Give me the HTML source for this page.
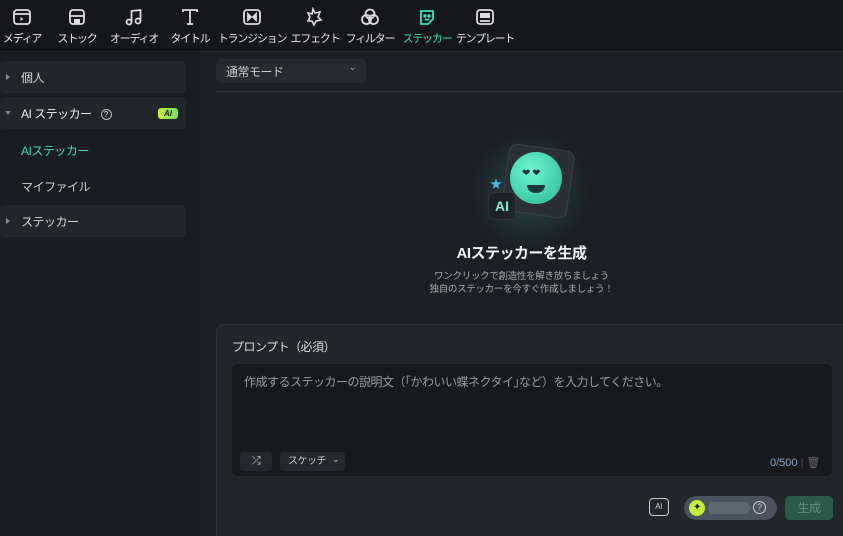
<!DOCTYPE html>
<html><head><meta charset="utf-8"><style>
*{margin:0;padding:0;box-sizing:border-box}
html,body{width:843px;height:536px;overflow:hidden}
body{background:#1b1e22;font-family:"Liberation Sans","Noto Sans CJK JP",sans-serif;color:#d6d8da;position:relative;font-size:12px;letter-spacing:-0.5px}
.top{position:absolute;left:0;top:0;width:843px;height:50px;background:#15171a;border-bottom:1px solid #0c0d0f}
.tab{position:absolute;top:0;width:80px;height:50px;text-align:center;font-size:11px;color:#e6e6e6;letter-spacing:-1.2px}
.tab svg{position:absolute;top:7px;left:50%;margin-left:-10px}
.tab span{position:absolute;top:30px;left:0;right:0;white-space:nowrap}
.side{position:absolute;left:0;top:51px;width:200px;height:485px;background:#191c20}
.row{position:absolute;left:0;width:186px;height:32px;background:#222529;border-radius:4px;font-size:12px;color:#d8d8d8}
.row .t{position:absolute;left:21px;top:8px}
.tri{position:absolute;left:6px;top:13px;width:0;height:0;border-top:3px solid transparent;border-bottom:3px solid transparent;border-left:4px solid #8a8d90}
.trid{position:absolute;left:5px;top:14px;width:0;height:0;border-left:3px solid transparent;border-right:3px solid transparent;border-top:4px solid #8a8d90}
.main{position:absolute;left:200px;top:51px;width:643px;height:485px;background:#1c1f23;overflow:hidden}
</style></head><body>
<div class="top">
 <div class="tab" style="left:-18px"><svg width="20" height="20" viewBox="0 0 20 20" fill="none" stroke="#ddd" stroke-width="1.8"><rect x="2" y="3" width="16" height="14" rx="3"/><line x1="2" y1="7" x2="18" y2="7"/><path d="M8.5 10v4l3-2z" fill="#ddd" stroke="none"/></svg><span>メディア</span></div>
 <div class="tab" style="left:37px"><svg width="20" height="20" viewBox="0 0 20 20" fill="none" stroke="#ddd" stroke-width="1.8"><rect x="3" y="3" width="14" height="14" rx="3"/><line x1="3" y1="9" x2="17" y2="9"/><rect x="7" y="12" width="6" height="5" fill="#ddd" stroke="none"/></svg><span>ストック</span></div>
 <div class="tab" style="left:94px"><svg width="20" height="20" viewBox="0 0 20 20" fill="none" stroke="#ddd" stroke-width="1.8"><circle cx="5" cy="15" r="2.5"/><circle cx="14" cy="14" r="2.5"/><path d="M7.5 15V4l9-1v11"/></svg><span>オーディオ</span></div>
 <div class="tab" style="left:150px"><svg width="20" height="20" viewBox="0 0 20 20" fill="none" stroke="#ddd" stroke-width="1.8"><path d="M3 5V3h14v2M10 3v14M7 17h6"/></svg><span>タイトル</span></div>
 <div class="tab" style="left:212px"><svg width="20" height="20" viewBox="0 0 20 20" fill="none" stroke="#ddd" stroke-width="1.8"><rect x="2" y="3" width="16" height="14" rx="3"/><path d="M6 7v6l3-3zM14 7v6l-3-3z" fill="#ddd"/></svg><span>トランジション</span></div>
 <div class="tab" style="left:275px"><svg width="20" height="20" viewBox="0 0 20 20" fill="none" stroke="#ddd" stroke-width="1.6"><path d="M8 2l2 4 5-1-2 5 3 3-5 1-2 4-2-4-4 0 2-4-2-4 4 1z"/></svg><span>エフェクト</span></div>
 <div class="tab" style="left:330px"><svg width="20" height="20" viewBox="0 0 20 20" fill="none" stroke="#ddd" stroke-width="1.8"><circle cx="10" cy="7" r="4.5"/><circle cx="6.5" cy="12.5" r="4.5"/><circle cx="13.5" cy="12.5" r="4.5"/></svg><span>フィルター</span></div>
 <div class="tab" style="left:387px;color:#3ee0b4"><svg width="20" height="20" viewBox="0 0 20 20" fill="none" stroke="#3ee0b4" stroke-width="1.8"><path d="M4 4h12v8l-5 5H4z"/><circle cx="8" cy="9" r=".8" fill="#3ee0b4"/><circle cx="12" cy="9" r=".8" fill="#3ee0b4"/><path d="M8 12q2 1.5 4 0"/></svg><span>ステッカー</span></div>
 <div class="tab" style="left:445px"><svg width="20" height="20" viewBox="0 0 20 20" fill="none" stroke="#ddd" stroke-width="1.8"><rect x="2" y="3" width="16" height="14" rx="3"/><rect x="5" y="6" width="10" height="5" fill="#ddd" stroke="none"/><line x1="5" y1="14" x2="15" y2="14"/></svg><span>テンプレート</span></div>
</div>
<div class="side">
 <div class="row" style="top:10px"><div class="tri"></div><div class="t">個人</div></div>
 <div class="row" style="top:46px"><div class="trid"></div><div class="t" style="color:#eee">AI ステッカー <span style="display:inline-block;width:11px;height:11px;border:1px solid #bbb;border-radius:50%;font-size:8px;text-align:center;line-height:9px;margin-left:6px;vertical-align:1px;letter-spacing:0">?</span></div><div style="position:absolute;left:158px;top:11px;width:20px;height:11px;border-radius:3px;background:linear-gradient(90deg,#c8f03a,#6ee06a);color:#1a1a1a;font-size:8px;font-weight:bold;font-style:italic;text-align:center;line-height:11px;letter-spacing:0">AI</div></div>
 <div style="position:absolute;left:21px;top:91px;color:#3ee0b4">AIステッカー</div>
 <div style="position:absolute;left:21px;top:127px;color:#d0d0d0">マイファイル</div>
 <div class="row" style="top:154px"><div class="tri"></div><div class="t">ステッカー</div></div>
</div>
<div class="main">
 <div style="position:absolute;left:16px;top:8px;width:150px;height:24px;background:#272a2f;border-radius:4px;font-size:12px;color:#ccc;padding:4px 10px">通常モード<span style="position:absolute;right:10px;top:3px;font-size:9px;color:#bbb">&#8964;</span></div>
 <div style="position:absolute;left:16px;top:40px;width:627px;height:1px;background:#2e3135"></div>
 <div style="position:absolute;left:270px;top:80px;width:120px;height:120px;border-radius:50%;background:radial-gradient(circle,rgba(60,220,180,.22),rgba(0,0,0,0) 70%)"></div>
 <div style="position:absolute;left:305px;top:96px;width:66px;height:68px;background:#2a2f36;border-radius:8px;transform:rotate(8deg);border:1px solid #3a4048"></div>
 <div style="position:absolute;left:310px;top:101px;width:52px;height:52px;border-radius:50%;background:radial-gradient(circle at 40% 35%,#6ff5d0,#2ab894)"></div>
 <div style="position:absolute;left:322px;top:117px;color:#20333a;font-size:10px">&#10084; &#10084;</div>
 <div style="position:absolute;left:327px;top:134px;width:18px;height:8px;border-radius:0 0 10px 10px;background:#1f3a3a"></div>
 <div style="position:absolute;left:288px;top:141px;width:28px;height:28px;border-radius:6px;background:#1d2328;border:1px solid #333;color:#7ff0c8;font-weight:bold;font-size:14px;text-align:center;line-height:26px;letter-spacing:0">AI</div>
 <div style="position:absolute;left:290px;top:124px;color:#4ab8e8;font-size:12px">★</div>
 <div style="position:absolute;left:0;width:643px;top:191px;text-align:center;font-size:15px;font-weight:bold;color:#f2f2f2">AIステッカーを生成</div>
 <div style="position:absolute;left:0;width:643px;top:219px;text-align:center;font-size:9.5px;color:#a8abae;line-height:13px;letter-spacing:-0.3px">ワンクリックで創造性を解き放ちましょう<br>独自のステッカーを今すぐ作成しましょう！</div>
 <div style="position:absolute;left:16px;top:273px;width:627px;height:212px;background:#23272b;border:1px solid #2e3237;border-right:none;border-bottom:none;border-radius:8px 0 0 0">
  <div style="position:absolute;left:15px;top:13px;font-size:12px;color:#ddd">プロンプト（必須）</div>
  <div style="position:absolute;left:15px;top:39px;width:600px;height:112px;background:#17191c;border-radius:5px">
   <div style="position:absolute;left:12px;top:9px;font-size:12px;color:#9a9da0">作成するステッカーの説明文（｢かわいい蝶ネクタイ｣など）を入力してください。</div>
   <div style="position:absolute;left:8px;top:88px;width:32px;height:19px;background:#25282c;border-radius:3px;color:#ccc;text-align:center;font-size:11px;line-height:19px">⤮</div>
   <div style="position:absolute;left:48px;top:88px;width:65px;height:19px;background:#25282c;border-radius:3px;color:#ccc;font-size:10px;line-height:19px;padding-left:8px">スケッチ<span style="position:absolute;right:6px;top:-2px;font-size:9px">&#8964;</span></div>
   <div style="position:absolute;left:538px;top:92px;font-size:11px;color:#8aa0c0;letter-spacing:0">0/500 <span style="color:#555">|</span> <span style="color:#666">🗑</span></div>
  </div>
  <div style="position:absolute;left:432px;top:173px;width:20px;height:18px;border:1.5px solid #ccc;border-radius:4px;font-size:8px;color:#ccc;text-align:center;line-height:15px;letter-spacing:0">AI</div>
  <div style="position:absolute;left:467px;top:171px;width:93px;height:24px;background:#4a525b;border-radius:12px">
   <div style="position:absolute;left:5px;top:4px;width:16px;height:16px;border-radius:50%;background:#c6f03c;color:#111;font-size:10px;text-align:center;line-height:16px">✦</div>
   <div style="position:absolute;left:24px;top:6px;width:42px;height:12px;border-radius:6px;background:#5f676f"></div>
   <div style="position:absolute;left:69px;top:5px;width:13px;height:13px;border:1.3px solid #ccc;border-radius:50%;font-size:9px;color:#ccc;text-align:center;line-height:11px;letter-spacing:0">?</div>
  </div>
  <div style="position:absolute;left:568px;top:171px;width:48px;height:24px;background:#2a5a4a;border-radius:4px;color:#5f8f7d;font-size:12px;text-align:center;line-height:24px">生成</div>
 </div>
</div>
</body></html>
